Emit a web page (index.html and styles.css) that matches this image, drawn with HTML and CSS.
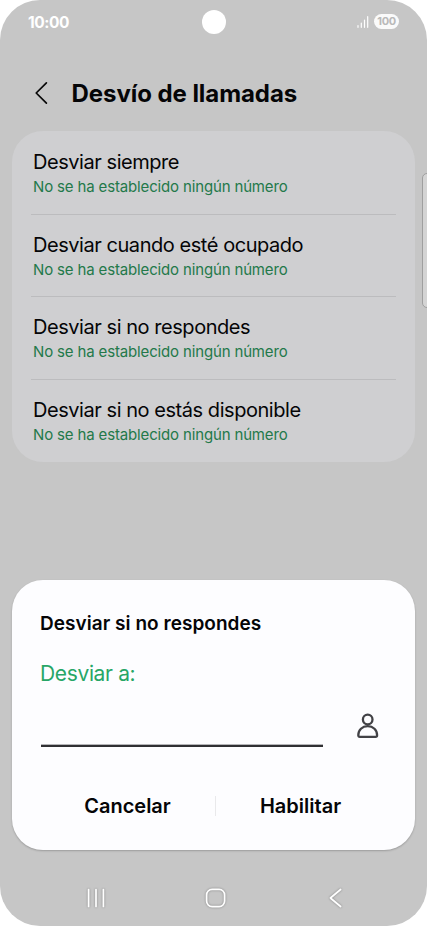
FILE: index.html
```html
<!DOCTYPE html>
<html lang="es">
<head>
<meta charset="utf-8">
<title>Desvío de llamadas</title>
<link rel="stylesheet" href="styles.css">
</head>
<body>
<div class="phone">
  <header class="status">
    <span class="time">10:00</span>
    <span class="camera"></span>
    <span class="indicators">
      <svg class="signal" width="12" height="12" viewBox="0 0 12 12"><path d="M1 9.6V11.3M4.3 7V11.3M7.5 4V11.3M10.7 .7V11.3"/></svg>
      <span class="battery">100</span>
    </span>
  </header>
  <div class="titlebar">
    <svg class="back" width="14" height="24" viewBox="0 0 14 24"><path d="M12.4 1.8 2.2 12 12.4 22.2"/></svg>
    <h1>Desvío de llamadas</h1>
  </div>
  <ul class="options">
    <li><span class="name">Desviar siempre</span><span class="state">No se ha establecido ningún número</span></li>
    <li><span class="name">Desviar cuando esté ocupado</span><span class="state">No se ha establecido ningún número</span></li>
    <li><span class="name">Desviar si no respondes</span><span class="state">No se ha establecido ningún número</span></li>
    <li><span class="name">Desviar si no estás disponible</span><span class="state">No se ha establecido ningún número</span></li>
  </ul>
  <section class="dialog">
    <h2>Desviar si no respondes</h2>
    <div class="label"><span>Desviar a:</span></div>
    <div class="entry">
      <div class="field"></div>
      <svg class="contact" width="24" height="28" viewBox="0 0 24 28"><circle cx="11.7" cy="6.5" r="4.8"/><path d="M3.8 23.8Q2.3 23.8 2.3 22.2C2.3 17 6.2 13.2 11.7 13.2S21.1 17 21.1 22.2Q21.1 23.8 19.6 23.8Z"/></svg>
    </div>
    <div class="actions">
      <button class="cancel"><span>Cancelar</span></button>
      <button class="enable"><span>Habilitar</span></button>
    </div>
  </section>
  <nav class="navbar">
    <svg width="22" height="24" viewBox="0 0 22 24"><path d="M3.6 3.5V20.5M11 3.5V20.5M18.4 3.5V20.5"/></svg>
    <svg width="22" height="24" viewBox="0 0 22 24"><rect x="1.6" y="3.4" width="18" height="17.2" rx="5.5"/></svg>
    <svg width="22" height="24" viewBox="0 0 22 24"><path d="M15.6 3.5 5.4 12 15.6 20.5"/></svg>
  </nav>
  <div class="edge"></div>
</div>
</body>
</html>
```
FILE: styles.css
```css
* { box-sizing: border-box; margin: 0; padding: 0; }
body { background: #fff; font-family: Inter, "Liberation Sans", sans-serif; color: #050507; }
svg { fill: none; stroke-linecap: round; stroke-linejoin: round; flex: none; }
.phone { position: relative; width: 427px; height: 926px; background: #c6c6c6; border-radius: 40px; overflow: hidden; }
.status { height: 44px; display: grid; grid-template-columns: 1fr 24px 1fr; align-items: center; padding: 0 28px; color: #fff; }
.time { font-size: 15.5px; font-weight: 700; letter-spacing: -.45px; }
.camera { width: 24px; height: 24px; border-radius: 50%; background: #fff; }
.indicators { display: flex; justify-content: flex-end; align-items: center; gap: 5px; padding-bottom: 1px; }
.signal { stroke: #fff; stroke-width: 1.2; }
.battery { width: 25px; height: 15px; border-radius: 8px; background: #fafafa; color: #b9b9b9; font-size: 11px; font-weight: 700; line-height: 15px; text-align: center; letter-spacing: -.4px; }
.titlebar { height: 87px; display: flex; align-items: center; padding: 0 0 0 34px; }
.back { margin-top: 11px; stroke: #080808; stroke-width: 1.7; }
h1 { margin: 13px 0 0 23.5px; font-size: 24px; line-height: 32px; font-weight: 700; white-space: nowrap; letter-spacing: -.06px; }
.options { margin: 0 12px; height: 331px; background: #cfcfd1; border-radius: 31px; list-style: none; display: grid; grid-template-rows: repeat(4, 1fr); padding: 1px 19px 0; }
.options li { padding: 17.4px 0 0 2px; display: flex; flex-direction: column; align-items: flex-start; border-bottom: 1px solid #bcbcbe; white-space: nowrap; }
.options li:last-child { border: 0; }
.name { font-size: 20px; line-height: 26px; letter-spacing: -.45px; }
.state { font-size: 15px; line-height: 23px; color: #23794a; letter-spacing: -.15px; }
.dialog { margin: 118px 12px 0; height: 270px; padding: 31px 28px 0; background: #fdfdff; border-radius: 31px; box-shadow: 0 1px 2px rgba(0,0,0,.22); }
h2 { font-size: 19px; line-height: 26px; font-weight: 600; white-space: nowrap; letter-spacing: .04px; }
.label { margin-top: 23px; font-size: 21px; line-height: 28px; color: #27a666; letter-spacing: -.35px; }
.entry { height: 59px; display: flex; align-items: flex-end; justify-content: space-between; padding: 0 7px 0 1px; }
.field { width: 282px; height: 30px; border-bottom: 2px solid #303033; box-shadow: inset 0 -1px #b5b5b8; }
.contact { margin-bottom: 6px; stroke: #424246; stroke-width: 2.3; }
.actions { display: grid; grid-template-columns: 176px 1fr; margin-top: 39px; height: 40px; align-items: center; }
button { border: 0; background: none; height: 20px; font: 600 20px/20px Inter, sans-serif; color: #050507; }
.cancel { border-right: 1px solid #e9e9eb; }
.enable { padding-right: 2px; }
.navbar { display: flex; height: 76px; padding: 20px 80px 0 85px; align-items: center; justify-content: space-between; }
.navbar svg { stroke: #fff; stroke-width: 1.7; filter: drop-shadow(0 0 1px rgba(0,0,0,.35)); }
.edge { position: absolute; left: 422px; top: 173px; width: 12px; height: 135px; border: 1px solid #9f9f9f; border-radius: 5px; background: #d4d4d4; }
```
